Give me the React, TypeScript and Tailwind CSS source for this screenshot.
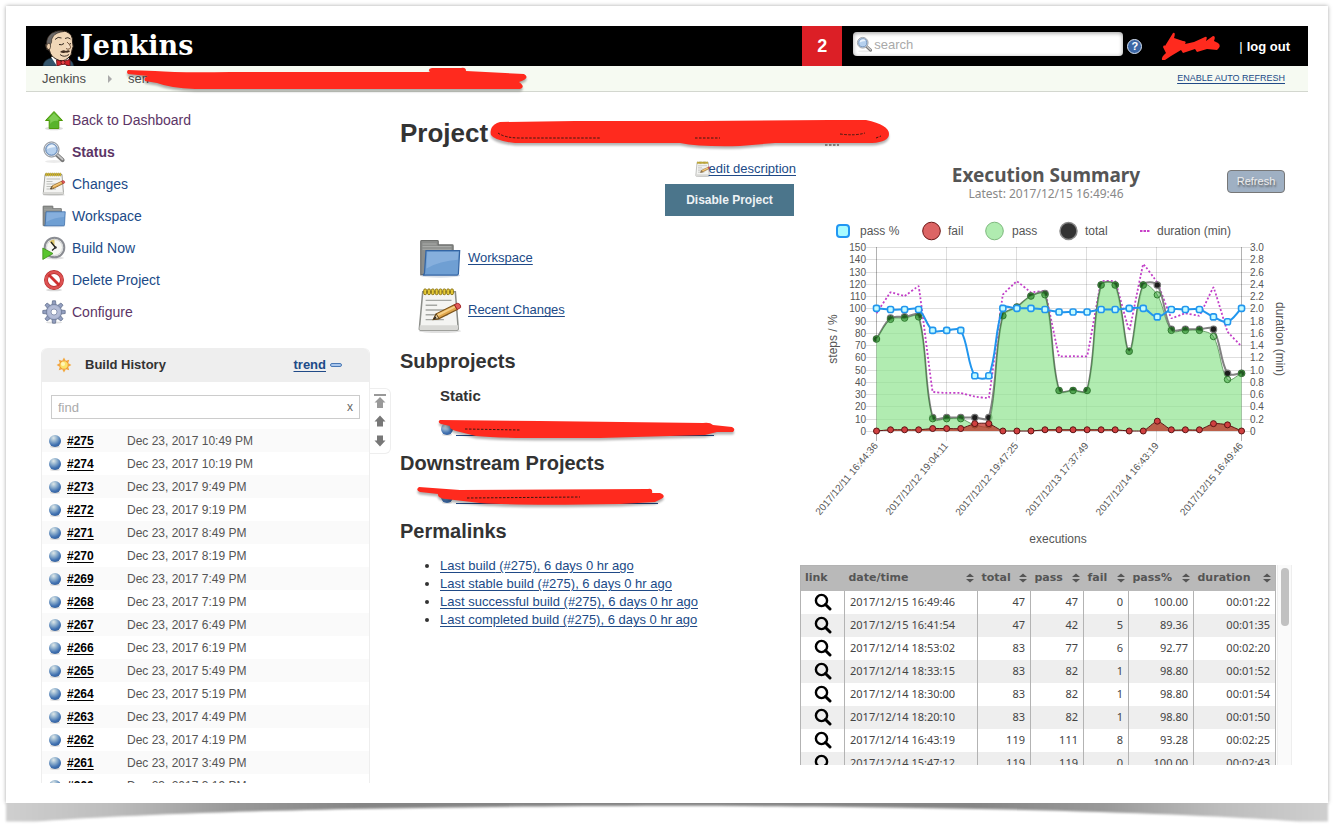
import React, { useState } from "react";

const SANS = "font-['Liberation_Sans',Arial,sans-serif]";
const LINK = "text-[#204a87] underline underline-offset-2";

type IconProps = { className?: string };

/* ---------- icons ---------- */

function Butler() {
  return (
    <svg viewBox="0 0 34 36" className="h-9 w-[34px]" aria-hidden="true">
      <path d="M1 36 Q2 29 10 28 L17 31 L26 29 Q31 31 31.500 36 Z" fill="#34556b" stroke="#1d3342" strokeWidth="0.600" />
      <path d="M9 27 L15 36 L24 36 L27 28 L18 24 Z" fill="#fff" />
      <path
        d="M5 15 Q3 13 4 17 Q4 20 7.500 20.500 Q8.500 26 14 29 Q21 33 26 28 Q30 26 30 20 Q32 17 30.500 12 Q31 4 24 1.500 Q16 -1 9 4 Q4.500 8 5 15 Z"
        fill="#f0d6b7"
        stroke="#2b211a"
        strokeWidth="1"
      />
      <path d="M4.500 15 Q4 7 10 3 Q16 0 22 1.500 Q14 2.500 11.500 6 Q9 9 9.500 12.500 L8 15 L7 20 Z" fill="#6b6867" stroke="#2b211a" strokeWidth="0.600" />
      <path d="M5 14.500 Q8 11.500 8.500 16 Q8.500 20 6 19.500 Q3.500 17 5 14.500 Z" fill="#edcfae" stroke="#2b211a" strokeWidth="0.700" />
      <path d="M13 9.500 Q16 6 19.500 8 M23 8.500 Q26 6.500 28.500 9" stroke="#2b211a" strokeWidth="0.900" fill="none" />
      <path d="M17 14.500 Q19.500 15.500 22 13.500 M25.500 13.500 Q27.500 15 29 13.500" stroke="#2b211a" strokeWidth="1" fill="none" />
      <path d="M25 12 Q30.500 17 27.500 19 Q25.500 19.500 24 18.500" stroke="#6b4a30" strokeWidth="0.900" fill="#f4dcc2" />
      <path d="M18 22 Q21 19 24 21 Q27 19.500 28 21.500 Q26 23 24 22.500 Q21 23.500 18 22 Z" fill="#3f2c1e" />
      <path d="M18 24.500 Q22 28 27 24.500" stroke="#2b211a" strokeWidth="0.900" fill="none" />
      <path d="M14.500 30 L20.500 31.500 L28 29.500 L28 36 L21.500 34 L15 36 Z" fill="#d3242c" stroke="#5e0e10" strokeWidth="0.800" />
      <circle cx="21" cy="32.500" r="2" fill="#e8474c" stroke="#5e0e10" strokeWidth="0.800" />
    </svg>
  );
}

function UpArrow({ className }: IconProps) {
  return (
    <svg viewBox="0 0 24 24" className={className} aria-hidden="true">
      <ellipse cx="12" cy="20.500" rx="9" ry="1.800" fill="#000" opacity="0.140" />
      <path d="M12 3.500 L20.500 12.500 H16.800 V20.500 H7.200 V12.500 H3.500 Z" fill="#58b32b" stroke="#4e9a06" strokeLinejoin="round" />
      <path d="M12 5.200 L18 11.600 H15.800 V13 Q11 12 8.200 16 V11.600 H6 Z" fill="#8ad35e" opacity="0.800" />
    </svg>
  );
}

function Magnifier({ className }: IconProps) {
  return (
    <svg viewBox="0 0 24 24" className={className} aria-hidden="true">
      <ellipse cx="12" cy="21.500" rx="9" ry="1.500" fill="#000" opacity="0.080" />
      <path d="M14.500 14.500 L20.500 20" stroke="#777" strokeWidth="4.200" strokeLinecap="round" />
      <path d="M15.500 14.800 L20.500 19.400" stroke="#c8c8c8" strokeWidth="1.800" strokeLinecap="round" />
      <circle cx="9.500" cy="9.500" r="7.600" fill="#d5d9de" stroke="#8a9099" strokeWidth="1" />
      <circle cx="9.500" cy="9.500" r="5.700" fill="#b5d0ee" stroke="#5b82b4" strokeWidth="1" />
      <path d="M5 9 Q6 4.500 10.500 4.500 Q13 5 13.500 7 Q8 7.500 5 9 Z" fill="#eaf3fc" />
    </svg>
  );
}

function Notepad({ className }: IconProps) {
  return (
    <svg viewBox="0 0 48 48" className={className} aria-hidden="true">
      <ellipse cx="24" cy="46" rx="22" ry="2" fill="#000" opacity="0.120" />
      <path d="M6 5 H40 L43 43 Q43 45 41 45 H4 Q2 45 2.500 43 Z" fill="#f4f4f2" stroke="#8b8d89" strokeWidth="1.600" />
      <path d="M3 40 H43 V43 Q43 45 41 45 H4 Q2 45 2.500 43 Z" fill="#d9d9d6" />
      <path d="M9 14 H36 M9 19 H21 M9 24 H36 M9 29 H32 M9 34 H28" stroke="#a5a7a3" strokeWidth="1.400" />
      {[7, 11, 15, 19, 23, 27, 31, 35].map((x) => (
        <rect key={x} x={x} y="2" width="3" height="6" rx="1.400" fill="#e6ca35" stroke="#8a7413" strokeWidth="1" />
      ))}
      <path d="M17 34 L20 28 L39 18.500 L42 23.500 L23 33 Z" fill="#e0a54a" stroke="#7b531b" strokeWidth="1.200" />
      <path d="M21 28.500 L39 19.800 L40 21.500 L22 30.500 Z" fill="#f5cf86" />
      <path d="M17 34 L20 28 L23 33 Z" fill="#e8d2a8" stroke="#5b3e15" />
      <path d="M17 34 L19 30.500 L20.500 32.500 Z" fill="#222" />
      <path d="M39 18.500 L42 17 Q46 17.500 45.500 21.500 L42 23.500 Z" fill="#e05a5a" stroke="#a02020" />
    </svg>
  );
}

function Folder({ className }: IconProps) {
  return (
    <svg viewBox="0 0 48 48" className={className} aria-hidden="true">
      <ellipse cx="24" cy="44" rx="23" ry="2.500" fill="#2f4f80" opacity="0.180" />
      <path d="M2 43 V5 Q2 4 3 4 H21 Q22 4 22 5 V9 H38 Q39 9 39 10 V30 L7 43 Z" fill="#8b8d8b" stroke="#6c6e6c" strokeWidth="1.300" />
      <path d="M4 8 H20 M4 11 H37 M4 14 H37" stroke="#a9aba9" strokeWidth="1.200" />
      <path d="M8 15.500 H46.500 L45 42 Q44.800 43.500 43.500 43.500 H4.500 Q6 43 6.300 41 Z" fill="#6f9fd3" stroke="#3465a4" strokeWidth="1.400" />
      <path d="M9.500 17 H45 L44.400 26 Q24 27 8.500 36 Z" fill="#86afdd" />
    </svg>
  );
}

function BuildClock({ className }: IconProps) {
  return (
    <svg viewBox="0 0 24 24" className={className} aria-hidden="true">
      <ellipse cx="13" cy="22" rx="9" ry="1.500" fill="#000" opacity="0.120" />
      <circle cx="12.500" cy="11.500" r="9.800" fill="#f3f3f0" stroke="#8a8c92" strokeWidth="2" />
      <circle cx="12.500" cy="11.500" r="8" fill="#f7f7f3" stroke="#c7c9cc" strokeWidth="0.800" />
      <path d="M12.500 11.500 L7.500 5.500 A8 8 0 0 1 12.500 3.600 Z" fill="#dcc66b" />
      <path d="M9 6 L13.500 11.500 L10 14.500" stroke="#222" strokeWidth="1.200" fill="none" />
      <circle cx="13.500" cy="11.500" r="1.200" fill="#333" />
      <path d="M0.800 12 L11 17.500 L0.800 23.500 Z" fill="#5ac52f" stroke="#3e8f16" strokeWidth="0.800" />
    </svg>
  );
}

function DeleteSign({ className }: IconProps) {
  return (
    <svg viewBox="0 0 24 24" className={className} aria-hidden="true">
      <ellipse cx="12" cy="22" rx="8" ry="1.300" fill="#000" opacity="0.150" />
      <circle cx="12" cy="12" r="8" fill="#fff" stroke="#b32a2a" strokeWidth="3.900" />
      <circle cx="12" cy="12" r="8" fill="none" stroke="#dd5252" strokeWidth="2.700" />
      <path d="M6.500 6.500 L17.500 17.500" stroke="#cf3030" strokeWidth="2.800" />
    </svg>
  );
}

function Gear({ className }: IconProps) {
  return (
    <svg viewBox="0 0 24 24" className={className} aria-hidden="true">
      <ellipse cx="12" cy="22.500" rx="8" ry="1" fill="#000" opacity="0.120" />
      {[0, 45, 90, 135, 180, 225, 270, 315].map((a) => (
        <path key={a} d="M10 5.500 L10.500 0.800 H13.500 L14 5.500 Z" transform={`rotate(${a} 12 12)`} fill="#939fc0" stroke="#66728f" strokeWidth="0.800" />
      ))}
      <circle cx="12" cy="12" r="7.700" fill="#a7b1cf" stroke="#66728f" strokeWidth="0.700" />
      <circle cx="12" cy="12" r="6.200" fill="#b4bcd6" />
      <circle cx="12" cy="12" r="3" fill="#fff" stroke="#7a86a6" strokeWidth="0.800" />
    </svg>
  );
}

function Sun() {
  return (
    <svg viewBox="0 0 16 16" className="h-4 w-4" aria-hidden="true">
      {[0, 45, 90, 135, 180, 225, 270, 315].map((a) => (
        <path key={a} d="M6.300 3.600 L8 0.600 L9.700 3.600 Z" transform={`rotate(${a} 8 8)`} fill="#f3a73c" />
      ))}
      <circle cx="8" cy="8" r="4.300" fill="#fbe36a" stroke="#f0952f" />
      <circle cx="7" cy="7" r="2" fill="#fff6b8" />
    </svg>
  );
}

function Ball() {
  return (
    <svg viewBox="0 0 14 14" className="h-3.5 w-3.5 shrink-0" aria-hidden="true">
      <defs>
        <radialGradient id="ball" cx="0.380" cy="0.250" r="0.800">
          <stop offset="0" stopColor="#dfe8e8" />
          <stop offset="0.350" stopColor="#93b3cf" />
          <stop offset="0.750" stopColor="#3f70b0" />
          <stop offset="1" stopColor="#35609b" />
        </radialGradient>
      </defs>
      <ellipse cx="7" cy="12.800" rx="5" ry="1" fill="#000" opacity="0.150" />
      <circle cx="7" cy="7" r="6" fill="url(#ball)" />
    </svg>
  );
}

function PagerArrow({ kind }: { kind: "top" | "up" | "down" }) {
  return (
    <svg viewBox="0 0 12 14" className="h-3.5 w-3" aria-hidden="true">
      {kind === "top" && <path d="M0 0 H12 V2 H0 Z M6 3 L11.500 8.500 H9 V14 H3 V8.500 H0.500 Z" fill="#999" />}
      {kind === "up" && <path d="M6 1.500 L11.500 7.500 H9 V12.500 H3 V7.500 H0.500 Z" fill="#777" />}
      {kind === "down" && <path d="M6 12.500 L11.500 6.500 H9 V1.500 H3 V6.500 H0.500 Z" fill="#777" />}
    </svg>
  );
}

function SortIcon() {
  return (
    <svg viewBox="0 0 8 10" className="h-2.5 w-2 shrink-0" aria-hidden="true">
      <path d="M4 0.500 L8 4 H0 Z M4 9.500 L8 6 H0 Z" fill="#555" />
    </svg>
  );
}

function RowSearch() {
  return (
    <svg viewBox="0 0 18 18" className="mx-auto block h-[18px] w-[18px]" aria-hidden="true">
      <circle cx="7.500" cy="7.500" r="5.600" fill="none" stroke="#000" strokeWidth="2.400" />
      <path d="M11.500 11.500 L16 16" stroke="#000" strokeWidth="3" strokeLinecap="round" />
    </svg>
  );
}

/* Marker stroke laid over private names. */
function Marker({ className, box, d, gaps }: { className: string; box: string; d: string; gaps?: string }) {
  return (
    <svg viewBox={box} className={`pointer-events-none absolute overflow-visible ${className}`} aria-hidden="true">
      <path d={d} fill="#000" opacity="0.300" transform="translate(0 2.500)" className="blur-[1px]" />
      <path d={d} fill="#ff2a1e" />
      {gaps && <path d={gaps} stroke="#26160f" strokeWidth="0.900" strokeDasharray="2.500 1.500" fill="none" />}
    </svg>
  );
}

/* ---------- data ---------- */

const tasks = [
  { label: "Back to Dashboard", Icon: UpArrow, tone: "text-[#5c3566]" },
  { label: "Status", Icon: Magnifier, tone: "font-bold text-[#5c3566]" },
  { label: "Changes", Icon: Notepad, tone: "text-[#204a87]" },
  { label: "Workspace", Icon: Folder, tone: "text-[#204a87]" },
  { label: "Build Now", Icon: BuildClock, tone: "text-[#204a87]" },
  { label: "Delete Project", Icon: DeleteSign, tone: "text-[#204a87]" },
  { label: "Configure", Icon: Gear, tone: "text-[#5c3566]" },
];

const builds: [number, string][] = [
  [275, "10:49"], [274, "10:19"], [273, "9:49"], [272, "9:19"], [271, "8:49"], [270, "8:19"],
  [269, "7:49"], [268, "7:19"], [267, "6:49"], [266, "6:19"], [265, "5:49"], [264, "5:19"],
  [263, "4:49"], [262, "4:19"], [261, "3:49"], [260, "3:19"],
];

const runs = [
  ["2017/12/15 16:49:46", "47", "47", "0", "100.00", "00:01:22"],
  ["2017/12/15 16:41:54", "47", "42", "5", "89.36", "00:01:35"],
  ["2017/12/14 18:53:02", "83", "77", "6", "92.77", "00:02:20"],
  ["2017/12/14 18:33:15", "83", "82", "1", "98.80", "00:01:52"],
  ["2017/12/14 18:30:00", "83", "82", "1", "98.80", "00:01:54"],
  ["2017/12/14 18:20:10", "83", "82", "1", "98.80", "00:01:50"],
  ["2017/12/14 16:43:19", "119", "111", "8", "93.28", "00:02:25"],
  ["2017/12/14 15:47:12", "119", "119", "0", "100.00", "00:02:43"],
];

const total = [75, 92, 93, 94, 11, 11, 11, 11, 11, 94, 101, 110, 112, 33, 33, 33, 119, 119, 65, 119, 119, 83, 83, 83, 83, 47, 47];
const fail = [0, 1, 1, 1, 2, 2, 2, 6, 6, 0, 0, 0, 1, 1, 1, 1, 1, 1, 0, 0, 8, 1, 1, 1, 6, 5, 0];
const pass = [75, 91, 92, 93, 10, 10, 10, 5, 5, 94, 101, 110, 111, 33, 33, 33, 119, 119, 65, 119, 111, 82, 82, 82, 77, 42, 47];
const passPct = [100, 99, 99, 99, 82, 82, 82, 45, 45, 100, 100, 100, 99, 97, 97, 97, 99, 99, 100, 100, 93, 99, 99, 99, 93, 89, 100];
const duration = [96, 113, 110, 118, 32, 31, 31, 28, 27, 111, 122, 113, 114, 61, 61, 61, 122, 122, 82, 136, 121, 92, 96, 94, 117, 81, 69];

/* ---------- chart ---------- */

const BASE = 211;
const px = (i: number) => 76.5 + i * 14.04;
const py = (v: number) => BASE - v * 1.2267;

function curve(values: number[], tension: number) {
  const p = values.map((v, i) => ({ x: px(i), y: py(v) }));
  const clamp = (y: number) => Math.min(BASE, y);
  const handles = p.map((c, i) => {
    const a = p[i - 1] ?? c;
    const b = p[i + 1] ?? c;
    const d1 = Math.hypot(c.x - a.x, c.y - a.y);
    const d2 = Math.hypot(b.x - c.x, b.y - c.y);
    const f1 = (tension * d1) / (d1 + d2 || 1);
    const f2 = (tension * d2) / (d1 + d2 || 1);
    return {
      in: [c.x - f1 * (b.x - a.x), clamp(c.y - f1 * (b.y - a.y))],
      out: [c.x + f2 * (b.x - a.x), clamp(c.y + f2 * (b.y - a.y))],
    };
  });
  return p
    .map((c, i) => (i === 0 ? `M${c.x} ${c.y}` : `C${handles[i - 1].out.join(" ")} ${handles[i].in.join(" ")} ${c.x} ${c.y}`))
    .join(" ");
}

const area = (values: number[], tension: number) => `${curve(values, tension)} L${px(26)} ${BASE} L${px(0)} ${BASE} Z`;

const xLabels: [number, string][] = [
  [0, "2017/12/11 16:44:36"],
  [5, "2017/12/12 19:04:11"],
  [10, "2017/12/12 19:47:25"],
  [15, "2017/12/13 17:37:49"],
  [20, "2017/12/14 16:43:19"],
  [26, "2017/12/15 16:49:46"],
];

function Chart() {
  const levels = Array.from({ length: 16 }, (_, i) => i);
  return (
    <svg viewBox="0 0 492 330" className={`block w-full ${SANS}`} role="img" aria-label="Execution summary chart">
      <g fontSize="12" fill="#555">
        <rect x="37" y="5" width="12" height="12" rx="3" fill="#a8fbff" stroke="#2196f3" strokeWidth="2" />
        <text x="60" y="15">pass %</text>
        <circle cx="131.500" cy="11" r="8.800" fill="#dc6464" stroke="#6b1414" />
        <text x="148" y="15">fail</text>
        <circle cx="194.500" cy="11" r="8.800" fill="#b0ecb0" stroke="#7db97d" />
        <text x="212" y="15">pass</text>
        <circle cx="268.500" cy="11" r="8.500" fill="#333" stroke="#888" strokeWidth="1.500" />
        <text x="285" y="15">total</text>
        <path d="M340 11 H350" stroke="#c840c8" strokeWidth="2" strokeDasharray="2.500 1" />
        <text x="357" y="15">duration (min)</text>
      </g>

      <g stroke="#000" strokeOpacity="0.130">
        {levels.map((l) => (
          <path key={l} d={`M66 ${Math.round(py(l * 10)) + 0.5} H452`} />
        ))}
        {xLabels.map(([i]) => (
          <path key={i} d={`M${Math.round(px(i)) - 0.5} 27 V221`} strokeOpacity={i === 0 || i === 26 ? 0.3 : 0.13} />
        ))}
      </g>

      <g fontSize="10" fill="#555">
        {levels.map((l) => (
          <text key={l} x="66" y={py(l * 10) + 4} textAnchor="end">{l * 10}</text>
        ))}
        {levels.map((l) => (
          <text key={l} x="450" y={py(l * 10) + 4}>{l === 0 ? "0" : (l / 5).toFixed(1)}</text>
        ))}
        {xLabels.map(([i, label]) => (
          <text key={i} transform={`translate(${px(i) + 2} 226) rotate(-50)`} textAnchor="end">{label}</text>
        ))}
      </g>
      <g fontSize="12" fill="#555" textAnchor="middle">
        <text transform="translate(37 119) rotate(-90)">steps / %</text>
        <text transform="translate(476 119) rotate(90)">duration (min)</text>
        <text x="258" y="323">executions</text>
      </g>

      <path d={curve(duration, 0.05)} fill="none" stroke="#c23fc8" strokeWidth="1.800" strokeDasharray="2 2" />
      <path d={curve(total, 0.35)} fill="none" stroke="#828282" strokeWidth="2" />
      {total.map((v, i) => (
        <circle key={i} cx={px(i)} cy={py(v)} r="3.200" fill="#1c1c1c" stroke="#777" strokeWidth="1.200" />
      ))}
      <path d={area(pass, 0.35)} fill="#90e490" fillOpacity="0.700" />
      <path d={curve(pass, 0.35)} fill="none" stroke="#2a6a2a" strokeOpacity="0.600" />
      {pass.map((v, i) => (
        <circle key={i} cx={px(i)} cy={py(v)} r="3.200" fill="#2fa02f" fillOpacity="0.450" stroke="#2f7a2f" />
      ))}
      <path d={area(fail, 0.2)} fill="#c03028" fillOpacity="0.750" />
      <path d={curve(fail, 0.2)} fill="none" stroke="#5c1414" />
      {fail.map((v, i) => (
        <circle key={i} cx={px(i)} cy={py(v)} r="3" fill="#d04040" stroke="#5c1414" />
      ))}
      <path d={curve(passPct, 0.35)} fill="none" stroke="#2196ee" strokeWidth="2" />
      {passPct.map((v, i) => (
        <rect key={i} x={px(i) - 3} y={py(v) - 3} width="6" height="6" rx="2" fill="#c4fbff" stroke="#2196ee" strokeWidth="1.600" />
      ))}
    </svg>
  );
}

/* ---------- page sections ---------- */

function TopBar() {
  return (
    <header className="flex h-10 items-stretch bg-black pl-4 text-white">
      <a href="#home" className="flex items-end gap-1">
        <Butler />
        <span className="self-center font-['DejaVu_Serif',serif] text-[27px] leading-9 font-bold">Jenkins</span>
      </a>
      <span className="ml-auto flex w-10 items-center justify-center bg-[#dc1f26] text-lg font-bold">2</span>
      <div className="mt-1.5 ml-[11px] flex h-6 w-[270px] items-center gap-px self-start rounded bg-white pl-[3px] shadow-[inset_0_1px_4px_rgba(0,0,0,0.4)]">
        <Magnifier className="h-[17px] w-[17px]" />
        <label className="sr-only" htmlFor="search">Search</label>
        <input id="search" placeholder="search" className="h-6 min-w-0 flex-1 bg-transparent text-[13px] text-gray-700 outline-none placeholder:text-[#a9a9a9]" />
      </div>
      <a href="#help" aria-label="Help" className="ml-1 flex h-[15px] w-[15px] items-center justify-center self-center rounded-full border border-[#d7e2f2] bg-[#3c67a5] text-[11px] leading-none font-bold text-white">?</a>
      <div className="relative mr-[18px] ml-[97px] flex items-center gap-1 pt-0.5 text-[13px]">
        <Marker
          className="top-1.5 -left-20 h-7 w-16"
          box="1160 32 64 28"
          d="M1163 60 Q1162 57 1167 53 L1164 47 Q1165 44 1166 46 L1174 33 Q1177 32 1175 38 L1184 41 Q1188 41 1186 44 L1195 42 L1206 37 Q1209 36 1207 41 L1214 36 Q1217 36 1215 41 L1219 43 Q1223 46 1218 50 L1208 49 L1198 52 L1196 49 L1184 53 L1182 50 L1172 56 L1166 60 Z"
        />
        <span aria-hidden="true">|</span>
        <a href="#logout" className="font-bold">log out</a>
      </div>
    </header>
  );
}

function Breadcrumbs() {
  return (
    <nav className="flex h-[26px] items-center border-b border-[#d3d7cf] bg-[#f6faf2] pr-[23px] pl-4 text-[13px] text-[#4d4d4d]">
      <a href="#jenkins">Jenkins</a>
      <svg viewBox="0 0 4 8" className="mr-4 ml-[22px] h-2 w-1" aria-hidden="true"><path d="M0 0 L4 4 L0 8 Z" fill="#aaa" /></svg>
      <span className="relative">
        <a href="#project">sen</a>
        <Marker
          className="-top-1.5 -left-0.5 h-7 w-[404px]"
          box="126 64 404 28"
          d="M128 71 Q126 73 128 75 L148 77 Q143 79 145 82 L157 84 Q170 89 195 90 H380 L520 90 Q526 88 519 83 Q531 79 524 75 L466 72 Q466 68 461 69 H432 Q427 70 430 73 H230 Q180 74 155 72 Z"
        />
      </span>
      <a href="#refresh" className="ml-auto text-[9px] text-[#204a87] underline underline-offset-2">ENABLE AUTO REFRESH</a>
    </nav>
  );
}

function BuildHistory() {
  const [filter, setFilter] = useState("");
  return (
    <section className="mt-5 ml-[15px] flex items-start">
      <div className="w-[329px] rounded-t-md border-x border-[#eee]">
        <div className="flex h-[34px] items-center rounded-t-md bg-[#eee] pr-[27px] pl-3.5 text-[13px]">
          <Sun />
          <h2 className="ml-[13px] font-bold text-[#333]">Build History</h2>
          <a href="#trend" className={`ml-auto font-bold ${LINK}`}>trend</a>
          <button aria-label="Collapse" className="ml-1 h-1 w-3 rounded-xs border border-[#4a78b5] bg-[#a9c6ec]" />
        </div>
        <div className="mx-[9px] mt-[13px] flex h-6 items-center border border-[#ccc] px-1.5 text-[13px]">
          <label className="sr-only" htmlFor="find">Find build</label>
          <input
            id="find"
            placeholder="find"
            value={filter}
            onChange={(e) => setFilter(e.target.value)}
            className="h-[22px] min-w-0 flex-1 bg-transparent outline-none placeholder:text-[#aaa]"
          />
          <button className="text-xs leading-4 text-[#666]" onClick={() => setFilter("")}>x</button>
        </div>
        <ul className="mt-2.5 h-[354px] overflow-hidden text-xs">
          {builds
            .filter(([n]) => `#${n}`.includes(filter))
            .map(([n, time], i) => (
              <li key={n} className={`flex h-[23px] items-center pl-1.5 ${i % 2 ? "bg-white" : "bg-[#fafafa]"}`}>
                <Ball />
                <a href={`#${n}`} className="ml-[5px] w-[60px] font-bold text-black underline underline-offset-2">#{n}</a>
                <span className="text-[#555]">Dec 23, 2017 {time} PM</span>
              </li>
            ))}
        </ul>
      </div>
      <div className="mt-10 flex h-[66px] w-[21px] flex-col items-center justify-around rounded-r-md border border-l-0 border-[#eee] py-0.5">
        <button aria-label="Newest builds" className="h-3.5"><PagerArrow kind="top" /></button>
        <button aria-label="Newer builds" className="h-3.5"><PagerArrow kind="up" /></button>
        <button aria-label="Older builds" className="h-3.5"><PagerArrow kind="down" /></button>
      </div>
    </section>
  );
}

function Overview() {
  return (
    <div className="min-w-0 flex-1 text-[13px]">
      <div className="flex flex-col items-end pt-2.5">
        <a href="#edit" className="flex h-5 items-center">
          <Notepad className="h-4 w-4 shrink-0" />
          <span className={`-ml-0.5 ${LINK}`}>edit description</span>
        </a>
        <button className="mt-[5px] mr-0.5 h-8 w-[129px] bg-[#4b758b] text-xs font-bold text-[#eef2f5]">Disable Project</button>
      </div>
      <div className="mt-[18px] ml-4 flex flex-col gap-1">
        <a href="#workspace" className="flex h-12 items-center gap-1">
          <Folder className="h-12 w-12 p-[3px]" />
          <span className={LINK}>Workspace</span>
        </a>
        <a href="#changes" className="flex h-12 items-center gap-1">
          <Notepad className="h-12 w-12 p-px" />
          <span className={LINK}>Recent Changes</span>
        </a>
      </div>
      <h2 className="mt-[15px] text-xl leading-6 font-bold text-[#333]">Subprojects</h2>
      <h3 className="mt-[11px] ml-10 text-[15px] leading-6 font-bold text-[#333]">Static</h3>
      <div className="relative mt-3 ml-10 flex h-[18px] items-center">
        <Ball />
        <span className="ml-0.5 h-px w-[258px] translate-y-1.5 bg-[#204a87]" />
        <Marker
          className="top-[-3px] left-[-3px] h-6 w-[300px]"
          box="437 417 300 24"
          d="M440 420 Q437 422 441 424 L450 426 Q449 429 456 431 L476 436 Q495 438 545 438 H600 L705 435 L717 432 L733 432 Q736 429 732 427 L713 425 Q710 422 703 423 L540 421 Z"
          gaps="M465 429 L520 430"
        />
      </div>
      <h2 className="mt-[13px] text-xl leading-6 font-bold text-[#333]">Downstream Projects</h2>
      <div className="relative mt-[13px] ml-10 flex h-[18px] items-center">
        <Ball />
        <span className="ml-0.5 h-px w-[202px] translate-y-1.5 bg-[#204a87]" />
        <Marker
          className="top-[-4px] left-[-25px] h-6 w-[254px]"
          box="415 484 254 24"
          d="M419 487 Q415 490 420 492 L438 494 Q437 498 446 499 L480 503 Q520 506 620 504 L655 502 L661 499 Q667 496 660 493 L652 493 Q653 488 648 489 L460 490 Z"
          gaps="M467 498 L580 497"
        />
      </div>
      <h2 className="mt-[13px] text-xl leading-6 font-bold text-[#333]">Permalinks</h2>
      <ul className="mt-3.5 ml-10 list-disc leading-[18px] marker:text-[#333]">
        {["Last build", "Last stable build", "Last successful build", "Last completed build"].map((t) => (
          <li key={t}><a href="#275" className={LINK}>{t} (#275), 6 days 0 hr ago</a></li>
        ))}
      </ul>
    </div>
  );
}

const columns = [
  { name: "link", width: "w-[44px]" },
  { name: "date/time", width: "w-[133px]" },
  { name: "total", width: "w-[53px]" },
  { name: "pass", width: "w-[53px]" },
  { name: "fail", width: "w-[45px]" },
  { name: "pass%", width: "w-[65px]" },
  { name: "duration", width: "w-[82px]" },
];

function RunsTable() {
  return (
    <div className="mt-[15px] flex h-[200px] overflow-hidden">
      <table className="table-fixed border-collapse self-start border border-[#b3b3b3] font-['Noto_Sans','Noto_Sans_CJK_SC',sans-serif] text-[11px] text-[#444]">
        <thead>
          <tr className="h-[25px] bg-[#b9b9b9] font-['DejaVu_Sans',sans-serif] text-[#555]">
            {columns.map((c, i) => (
              <th key={c.name} className={`p-0 pr-1 pl-1 text-left font-bold ${c.width}`}>
                <span className="flex items-center justify-between">
                  {c.name}
                  {i > 0 && <SortIcon />}
                </span>
              </th>
            ))}
          </tr>
        </thead>
        <tbody>
          {runs.map((r, n) => (
            <tr key={r[0]} className={`h-[23px] ${n % 2 ? "bg-[#eee]" : "bg-white"}`}>
              <td className="border-r border-[#b3b3b3] p-0"><a href="#run" aria-label={`Open run ${r[0]}`}><RowSearch /></a></td>
              {r.map((v, i) => (
                <td key={i} className={`border-r border-[#b3b3b3] p-0 px-[5px] ${i ? "text-right" : "text-left"}`}>{v}</td>
              ))}
            </tr>
          ))}
        </tbody>
      </table>
      <div className="ml-px flex-1 border-x border-[#eee] bg-[#fafafa] pt-[3px]">
        <div className="mx-auto h-[58px] w-2 rounded-full bg-[#c1c1c1]" />
      </div>
    </div>
  );
}

function ExecutionSummary() {
  return (
    <section className="w-[492px] shrink-0 pt-3.5">
      <div className="grid grid-cols-[1fr_auto_1fr] font-['Noto_Sans',sans-serif]">
        <div className="col-start-2 text-center">
          <h2 className="text-[19px] leading-6 font-bold text-[#555]">Execution Summary</h2>
          <p className="text-xs leading-[13px] text-[#888]">Latest: 2017/12/15 16:49:46</p>
        </div>
        <button className={`mt-[7px] mr-[7px] h-[23px] w-[58px] justify-self-end rounded border border-[#777] bg-[#9fb0c3] text-[11px] text-[#eee] [text-shadow:1px_2px_2px_#555] ${SANS}`}>Refresh</button>
      </div>
      <div className="mt-5"><Chart /></div>
      <RunsTable />
    </section>
  );
}

export default function App() {
  return (
    <div className={`min-h-screen bg-white pt-1.5 pr-3.5 pl-1.5 ${SANS}`}>
      <div className="relative bg-white p-5 shadow-[0_0_4px_rgba(0,0,0,0.35)]">
        <TopBar />
        <Breadcrumbs />
        <div className="flex">
          <aside className="w-[374px] shrink-0 pt-3">
            <ul className="pl-4">
              {tasks.map(({ label, Icon, tone }) => (
                <li key={label} className="h-8">
                  <a href="#task" className={`flex h-8 items-center gap-1.5 text-sm ${tone}`}>
                    <Icon className="h-6 w-6" />
                    {label}
                  </a>
                </li>
              ))}
            </ul>
            <BuildHistory />
          </aside>
          <main className="min-w-0 flex-1 pt-[25px] pr-4">
            <h1 className="relative text-[26px] leading-8 font-bold text-[#333]">
              Project
              <Marker
                className="top-0 left-[90px] h-8 w-[400px]"
                box="490 117 400 32"
                d="M497 123 Q489 127 491 135 Q495 141 515 143 H680 Q700 147 740 146 L775 143 H872 Q889 142 889 134 Q889 125 866 120 H830 L700 121 H575 L500 122 Z"
                gaps="M498 133 Q505 138 520 138 H600 M695 138 H720 M840 134 Q855 136 865 133 M876 138 L881 136 M825 145 H839"
              />
            </h1>
            <div className="flex gap-1">
              <Overview />
              <ExecutionSummary />
            </div>
          </main>
        </div>
      </div>
      <svg viewBox="0 0 1322 28" preserveAspectRatio="none" className="relative block h-[26px] w-full overflow-visible" aria-hidden="true">
        <defs>
          <linearGradient id="curl">
            <stop offset="0" stopColor="#cfcfcf" />
            <stop offset="0.080" stopColor="#bdbdbd" />
            <stop offset="0.170" stopColor="#999" />
            <stop offset="0.270" stopColor="#858585" />
            <stop offset="0.730" stopColor="#858585" />
            <stop offset="0.830" stopColor="#999" />
            <stop offset="0.920" stopColor="#bdbdbd" />
            <stop offset="1" stopColor="#cfcfcf" />
          </linearGradient>
          <clipPath id="below"><rect x="-6" y="0" width="1334" height="28" /></clipPath>
        </defs>
        <g clipPath="url(#below)">
          <path d="M0 -6 V20 H30 C110 13 300 4 661 3 C1022 4 1212 13 1292 20 H1322 V-6 Z" fill="url(#curl)" className="blur-[1px]" />
        </g>
      </svg>
    </div>
  );
}
